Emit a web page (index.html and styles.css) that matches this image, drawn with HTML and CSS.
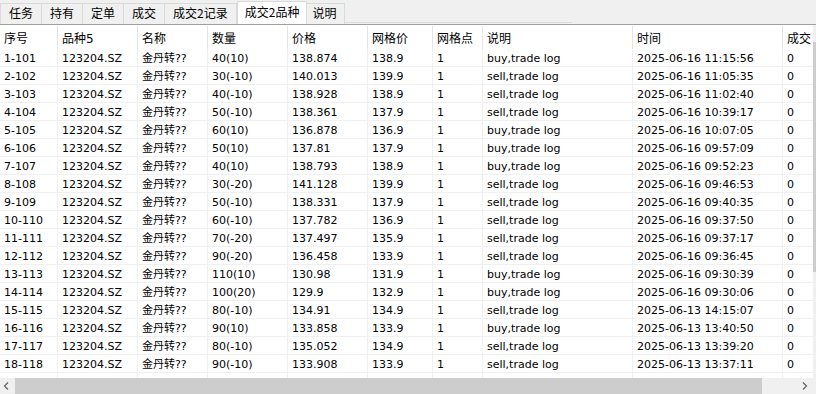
FILE: index.html
```html
<!DOCTYPE html>
<html lang="zh-CN">
<head>
    <meta charset="UTF-8">
    <title>成交2品种</title>
    <link rel="stylesheet" href="styles.css">
</head>
<body>
    <div class="tabs">
        <div class="tab first">任务</div>
        <div class="tab">持有</div>
        <div class="tab">定单</div>
        <div class="tab">成交</div>
        <div class="tab">成交2记录</div>
        <div class="tab active">成交2品种</div>
        <div class="tab">说明</div>
        <div class="tabs-rule"></div>
    </div>

    <div class="view">
        <div class="grid">
            <div class="row head">
                <div class="cell">序号</div><div class="cell">品种5</div><div class="cell">名称</div><div class="cell">数量</div><div class="cell">价格</div><div class="cell">网格价</div><div class="cell">网格点</div><div class="cell">说明</div><div class="cell">时间</div><div class="cell">成交</div>
            </div>
            <div class="row"><div class="cell">1-101</div><div class="cell">123204.SZ</div><div class="cell">金丹转??</div><div class="cell">40(10)</div><div class="cell">138.874</div><div class="cell">138.9</div><div class="cell">1</div><div class="cell">buy,trade log</div><div class="cell">2025-06-16 11:15:56</div><div class="cell">0</div></div>
            <div class="row"><div class="cell">2-102</div><div class="cell">123204.SZ</div><div class="cell">金丹转??</div><div class="cell">30(-10)</div><div class="cell">140.013</div><div class="cell">139.9</div><div class="cell">1</div><div class="cell">sell,trade log</div><div class="cell">2025-06-16 11:05:35</div><div class="cell">0</div></div>
            <div class="row"><div class="cell">3-103</div><div class="cell">123204.SZ</div><div class="cell">金丹转??</div><div class="cell">40(-10)</div><div class="cell">138.928</div><div class="cell">138.9</div><div class="cell">1</div><div class="cell">sell,trade log</div><div class="cell">2025-06-16 11:02:40</div><div class="cell">0</div></div>
            <div class="row"><div class="cell">4-104</div><div class="cell">123204.SZ</div><div class="cell">金丹转??</div><div class="cell">50(-10)</div><div class="cell">138.361</div><div class="cell">137.9</div><div class="cell">1</div><div class="cell">sell,trade log</div><div class="cell">2025-06-16 10:39:17</div><div class="cell">0</div></div>
            <div class="row"><div class="cell">5-105</div><div class="cell">123204.SZ</div><div class="cell">金丹转??</div><div class="cell">60(10)</div><div class="cell">136.878</div><div class="cell">136.9</div><div class="cell">1</div><div class="cell">buy,trade log</div><div class="cell">2025-06-16 10:07:05</div><div class="cell">0</div></div>
            <div class="row"><div class="cell">6-106</div><div class="cell">123204.SZ</div><div class="cell">金丹转??</div><div class="cell">50(10)</div><div class="cell">137.81</div><div class="cell">137.9</div><div class="cell">1</div><div class="cell">buy,trade log</div><div class="cell">2025-06-16 09:57:09</div><div class="cell">0</div></div>
            <div class="row"><div class="cell">7-107</div><div class="cell">123204.SZ</div><div class="cell">金丹转??</div><div class="cell">40(10)</div><div class="cell">138.793</div><div class="cell">138.9</div><div class="cell">1</div><div class="cell">buy,trade log</div><div class="cell">2025-06-16 09:52:23</div><div class="cell">0</div></div>
            <div class="row"><div class="cell">8-108</div><div class="cell">123204.SZ</div><div class="cell">金丹转??</div><div class="cell">30(-20)</div><div class="cell">141.128</div><div class="cell">139.9</div><div class="cell">1</div><div class="cell">sell,trade log</div><div class="cell">2025-06-16 09:46:53</div><div class="cell">0</div></div>
            <div class="row"><div class="cell">9-109</div><div class="cell">123204.SZ</div><div class="cell">金丹转??</div><div class="cell">50(-10)</div><div class="cell">138.331</div><div class="cell">137.9</div><div class="cell">1</div><div class="cell">sell,trade log</div><div class="cell">2025-06-16 09:40:35</div><div class="cell">0</div></div>
            <div class="row"><div class="cell">10-110</div><div class="cell">123204.SZ</div><div class="cell">金丹转??</div><div class="cell">60(-10)</div><div class="cell">137.782</div><div class="cell">136.9</div><div class="cell">1</div><div class="cell">sell,trade log</div><div class="cell">2025-06-16 09:37:50</div><div class="cell">0</div></div>
            <div class="row"><div class="cell">11-111</div><div class="cell">123204.SZ</div><div class="cell">金丹转??</div><div class="cell">70(-20)</div><div class="cell">137.497</div><div class="cell">135.9</div><div class="cell">1</div><div class="cell">sell,trade log</div><div class="cell">2025-06-16 09:37:17</div><div class="cell">0</div></div>
            <div class="row"><div class="cell">12-112</div><div class="cell">123204.SZ</div><div class="cell">金丹转??</div><div class="cell">90(-20)</div><div class="cell">136.458</div><div class="cell">133.9</div><div class="cell">1</div><div class="cell">sell,trade log</div><div class="cell">2025-06-16 09:36:45</div><div class="cell">0</div></div>
            <div class="row"><div class="cell">13-113</div><div class="cell">123204.SZ</div><div class="cell">金丹转??</div><div class="cell">110(10)</div><div class="cell">130.98</div><div class="cell">131.9</div><div class="cell">1</div><div class="cell">buy,trade log</div><div class="cell">2025-06-16 09:30:39</div><div class="cell">0</div></div>
            <div class="row"><div class="cell">14-114</div><div class="cell">123204.SZ</div><div class="cell">金丹转??</div><div class="cell">100(20)</div><div class="cell">129.9</div><div class="cell">132.9</div><div class="cell">1</div><div class="cell">buy,trade log</div><div class="cell">2025-06-16 09:30:06</div><div class="cell">0</div></div>
            <div class="row"><div class="cell">15-115</div><div class="cell">123204.SZ</div><div class="cell">金丹转??</div><div class="cell">80(-10)</div><div class="cell">134.91</div><div class="cell">134.9</div><div class="cell">1</div><div class="cell">sell,trade log</div><div class="cell">2025-06-13 14:15:07</div><div class="cell">0</div></div>
            <div class="row"><div class="cell">16-116</div><div class="cell">123204.SZ</div><div class="cell">金丹转??</div><div class="cell">90(10)</div><div class="cell">133.858</div><div class="cell">133.9</div><div class="cell">1</div><div class="cell">buy,trade log</div><div class="cell">2025-06-13 13:40:50</div><div class="cell">0</div></div>
            <div class="row"><div class="cell">17-117</div><div class="cell">123204.SZ</div><div class="cell">金丹转??</div><div class="cell">80(-10)</div><div class="cell">135.052</div><div class="cell">134.9</div><div class="cell">1</div><div class="cell">sell,trade log</div><div class="cell">2025-06-13 13:39:20</div><div class="cell">0</div></div>
            <div class="row"><div class="cell">18-118</div><div class="cell">123204.SZ</div><div class="cell">金丹转??</div><div class="cell">90(-10)</div><div class="cell">133.908</div><div class="cell">133.9</div><div class="cell">1</div><div class="cell">sell,trade log</div><div class="cell">2025-06-13 13:37:11</div><div class="cell">0</div></div>
            <!-- next row is scrolled under the scrollbar, only its grid lines show -->
            <div class="row"><div class="cell"></div><div class="cell"></div><div class="cell"></div><div class="cell"></div><div class="cell"></div><div class="cell"></div><div class="cell"></div><div class="cell"></div><div class="cell"></div><div class="cell"></div></div>
        </div>
        <div class="vscroll">
            <div class="vs-btn"></div>
            <div class="vs-thumb"></div>
        </div>
    </div>

    <div class="hscroll">
        <div class="hs-btn left">
            <svg width="6" height="8" viewBox="0 0 6 8"><polyline points="5,0.5 1.5,4 5,7.5" fill="none" stroke="#606060" stroke-width="1.2"/></svg>
        </div>
        <div class="hs-thumb"></div>
        <div class="hs-track"></div>
        <div class="hs-btn right">
            <svg width="6" height="8" viewBox="0 0 6 8"><polyline points="1,0.5 4.5,4 1,7.5" fill="none" stroke="#606060" stroke-width="1.2"/></svg>
        </div>
        <div class="corner"></div>
    </div>
</body>
</html>
```
FILE: styles.css
```css
body {
    margin: 0;
    width: 816px;
    height: 394px;
    overflow: hidden;
    background-color: #fff;
    color: #000;
    font-family: "DejaVu Sans", "Noto Sans CJK SC", sans-serif;
    font-size: 11px;
}

/* tab strip */
.tabs {
    display: flex;
    align-items: flex-end;
    height: 24px;
    background-color: #f0f0f0;
    border-bottom: 1px solid #a0a0a0;
    font-family: "Noto Sans CJK SC", sans-serif;
    font-size: 12px;
}
.tab {
    box-sizing: border-box;
    height: 21px;
    padding: 0 8px;
    line-height: 18px;
    border: 1px solid #d9d9d9;
    border-left: none;
    border-bottom: none;
    white-space: nowrap;
}
.tab.first {
    border-left: 1px solid #d9d9d9;
}
.tab.active {
    height: 23px;
    padding: 1px 7px 0;
    margin-right: -3px;
    position: relative;
    background-color: #fff;
    border-left: 1px solid #d9d9d9;
}
.tabs-rule {
    width: 227px;
    border-bottom: 1px solid #dcdcdc;
    margin-bottom: 1px;
}

/* grid */
.view {
    display: flex;
    height: 353px;
}
.grid {
    flex: 1;
    overflow: hidden;
    background-color: #fff;
}
.row {
    display: grid;
    grid-template-columns: 58px 80px 70px 80px 80px 65px 50px 150px 150px 80px;
    height: 18px;
    box-sizing: border-box;
    border-bottom: 1px solid #f0f0f0;
    white-space: nowrap;
}
.cell {
    box-sizing: border-box;
    padding: 3px 0 0 4px;
    line-height: 14px;
    border-right: 1px solid #f0f0f0;
    overflow: hidden;
}
.row.head {
    height: 24px;
    border-bottom: none;
    font-size: 12px;
}
.row.head .cell {
    margin-top: 1px;
    padding-top: 4px;
    line-height: 18px;
    border-right-color: #e5e5e5;
}

/* scrollbars */
.vscroll {
    width: 3px;
    background-color: #f0f0f0;
}
.vs-btn {
    height: 17px;
}
.vs-thumb {
    height: 230px;
    background-color: #cdcdcd;
}
.hscroll {
    display: flex;
    height: 16px;
    background-color: #f0f0f0;
}
.hs-btn {
    display: flex;
    align-items: center;
}
.hs-btn.left {
    width: 15px;
    padding-left: 3px;
    box-sizing: border-box;
}
.hs-btn.right {
    width: 17px;
    justify-content: center;
}
.hs-thumb {
    width: 747px;
    background-color: #cdcdcd;
}
.hs-track {
    flex: 1;
}
.corner {
    width: 3px;
}
```
